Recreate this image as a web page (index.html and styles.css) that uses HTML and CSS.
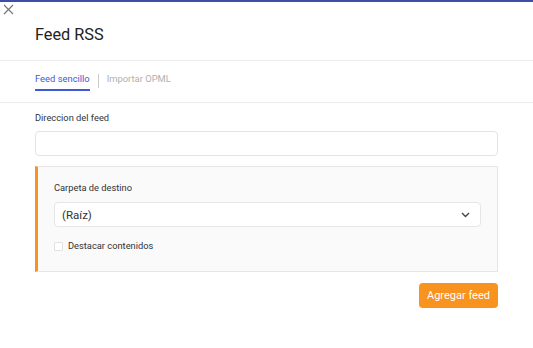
FILE: index.html
```html
<!DOCTYPE html>
<html lang="es">
<head>
    <meta charset="UTF-8">
    <meta name="viewport" content="width=device-width, initial-scale=1.0">
    <title>Feed RSS</title>
    <link rel="stylesheet" href="styles.css">
</head>
<body>
    <div class="topbar"></div>

    <div class="modal-header">
        <button class="close-btn" aria-label="Cerrar">
            <svg width="11" height="11" viewBox="0 0 11 11">
                <path d="M1 1 L10 10 M10 1 L1 10" stroke="#777" stroke-width="1.2" fill="none"/>
            </svg>
        </button>
        <h1>Feed RSS</h1>
    </div>

    <div class="tabs">
        <div class="tab active">Feed sencillo</div>
        <div class="tab-sep"></div>
        <div class="tab">Importar OPML</div>
    </div>

    <div class="modal-body">
        <div class="field">
            <label>Direccion del feed</label>
            <input type="text" class="text-input">
        </div>

        <div class="options">
            <div class="field">
                <label>Carpeta de destino</label>
                <div class="select">
                    <span>(Raíz)</span>
                    <svg width="9" height="6" viewBox="0 0 9 6">
                        <path d="M1 1 L4.5 4.5 L8 1" stroke="#444" stroke-width="1.4" fill="none"/>
                    </svg>
                </div>
            </div>
            <label class="check">
                <span class="box"></span>
                Destacar contenidos
            </label>
        </div>

        <div class="actions">
            <button class="submit-btn">Agregar feed</button>
        </div>
    </div>
</body>
</html>
```

FILE: styles.css
```css
* {
    margin: 0;
    padding: 0;
    box-sizing: border-box;
}

body {
    font-family: Roboto, 'Liberation Sans', sans-serif;
    background: #fff;
    color: #333;
    width: 533px;
}

.topbar {
    height: 2px;
    background: #3c4fa6;
}

.modal-header {
    height: 57px;
    border-bottom: 1px solid #ececec;
}

.close-btn {
    display: block;
    border: none;
    background: none;
    margin: 2px 0 0 3px;
    width: 11px;
    height: 11px;
    cursor: pointer;
}

.close-btn svg {
    display: block;
}

.modal-header h1 {
    font-size: 16.3px;
    font-weight: 400;
    color: #222;
    padding-left: 35px;
    margin-top: 10px;
    line-height: 20px;
}

.tabs {
    height: 42px;
    display: flex;
    align-items: flex-start;
    padding: 12px 0 0 35px;
    border-bottom: 1px solid #ececec;
}

.tab {
    font-size: 9.4px;
    line-height: 12px;
    color: #b0b0b0;
}

.tab.active {
    color: #3d5ad4;
    padding-bottom: 4px;
    border-bottom: 2px solid #3d5ad4;
}

.tab-sep {
    width: 1px;
    height: 14px;
    margin: 1px 8px 0 8px;
    background: #ccc;
}

.modal-body {
    padding: 0 35px;
}

.field label {
    display: block;
    font-size: 9.3px;
    color: #333;
    line-height: 12px;
}

.modal-body > .field label {
    margin-top: 9px;
}

.text-input {
    display: block;
    width: 100%;
    height: 25px;
    margin-top: 7px;
    border: 1px solid #e4e4e4;
    border-radius: 4px;
    outline: none;
}

.options {
    margin-top: 10px;
    height: 106px;
    background: #fafafa;
    border: 1px solid #e6e6e6;
    border-left: 3px solid #f7931e;
    padding: 15px 16px 0 16px;
}

.select {
    margin-top: 8px;
    height: 25px;
    background: #fff;
    border: 1px solid #e6e6e6;
    border-radius: 4px;
    display: flex;
    align-items: center;
    justify-content: space-between;
    padding: 0 10px 0 7px;
    font-size: 11.5px;
    color: #333;
}

.check {
    display: flex;
    align-items: center;
    gap: 5px;
    margin-top: 14px;
    font-size: 9.3px;
    line-height: 10px;
    color: #333;
}

.check .box {
    width: 9px;
    height: 9px;
    border: 1px solid #e2e2e2;
    background: #fff;
    border-radius: 1px;
}

.actions {
    display: flex;
    justify-content: flex-end;
    margin-top: 11px;
}

.submit-btn {
    background: #f7931e;
    color: #fff;
    border: none;
    border-radius: 4px;
    height: 25px;
    padding: 0 8px;
    white-space: nowrap;
    font-family: Roboto, 'Liberation Sans', sans-serif;
    font-size: 11px;
    cursor: pointer;
}
```
